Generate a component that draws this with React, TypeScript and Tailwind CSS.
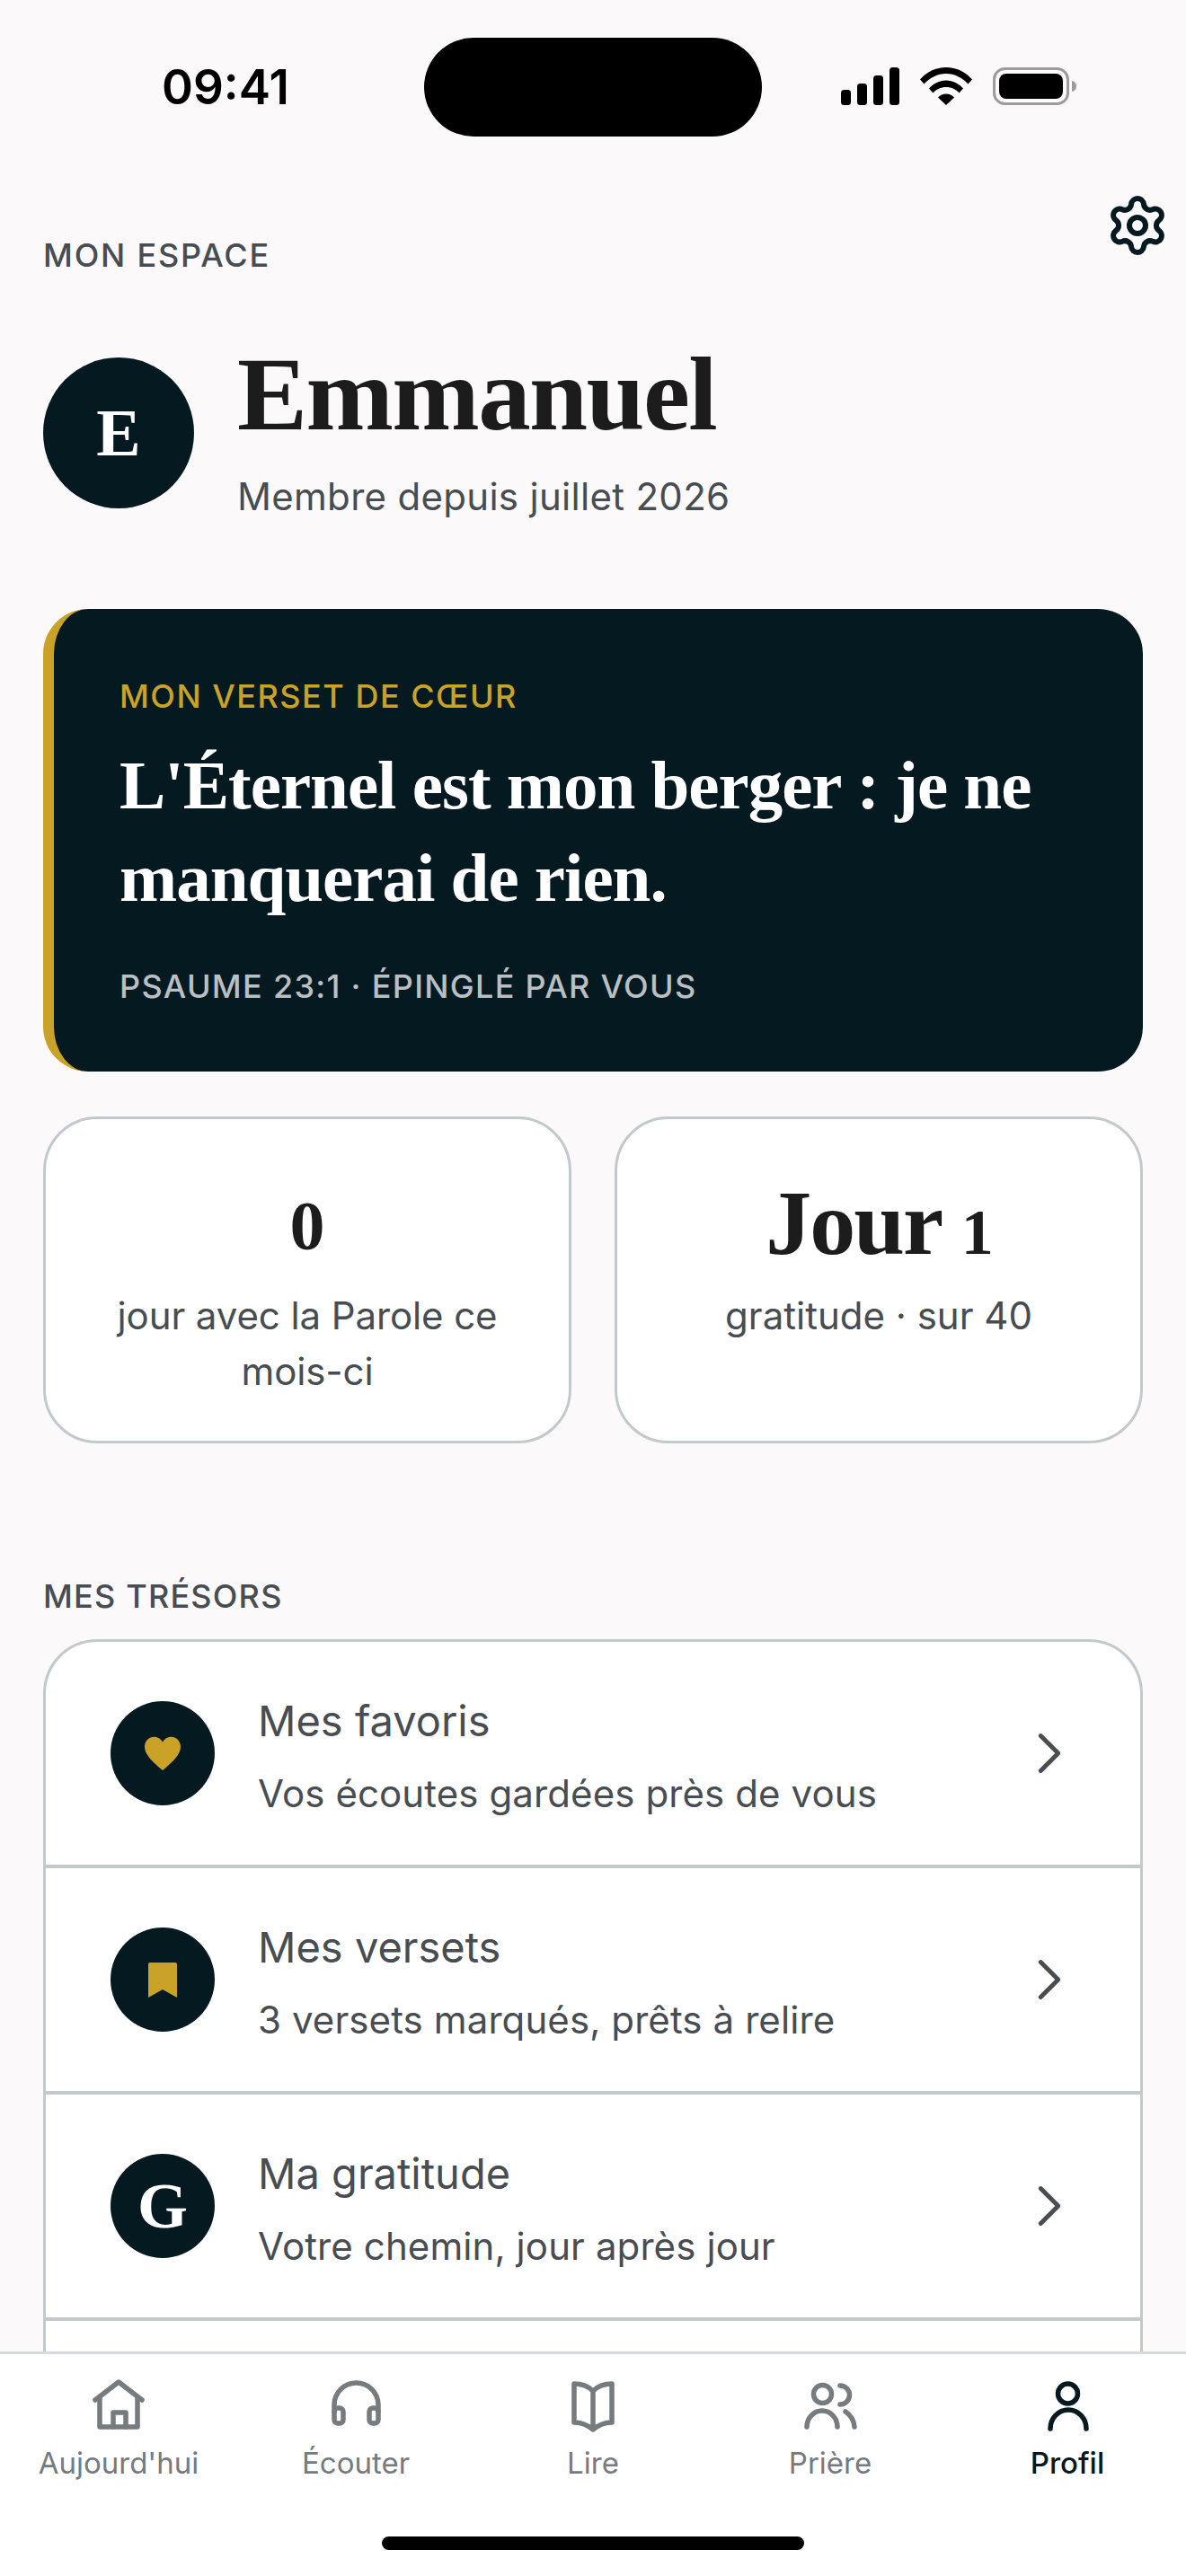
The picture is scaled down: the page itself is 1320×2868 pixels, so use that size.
import { Settings, ChevronRight } from 'lucide-react';

const SANS = 'font-["Inter","Noto_Sans",sans-serif]';
const SERIF = 'font-["Liberation_Serif",serif]';

const treasures = [
  { title: 'Mes favoris', sub: 'Vos écoutes gardées près de vous', icon: 'heart' },
  { title: 'Mes versets', sub: '3 versets marqués, prêts à relire', icon: 'bookmark' },
  { title: 'Ma gratitude', sub: 'Votre chemin, jour après jour', icon: 'g' },
];

const tabs = [
  { label: "Aujourd'hui", icon: 'home' },
  { label: 'Écouter', icon: 'headphones' },
  { label: 'Lire', icon: 'book' },
  { label: 'Prière', icon: 'users' },
  { label: 'Profil', icon: 'user', active: true },
];

function TabIcon({ name }: { name: string }) {
  return (
    <svg width="72" height="72" viewBox="0 0 72 72" fill="none" stroke="currentColor" strokeWidth="5.500" strokeLinecap="round" strokeLinejoin="round">
      {name === 'home' && (
        <>
          <path d="M10 32 36 12l26 20" />
          <path d="M15 29v33h42V29" />
          <path d="M30 62V46h14v16" />
        </>
      )}
      {name === 'headphones' && (
        <>
          <path d="M12 45V37.500a24.500 24.500 0 0 1 49 0V45" />
          <rect x="12" y="41" width="10" height="17" rx="4" />
          <rect x="51" y="41" width="10" height="17" rx="4" />
        </>
      )}
      {name === 'book' && (
        <path d="M36 22C30 16 22 14 15 14v43c8 0 15 3 21 8 6-5 13-8 21-8V14c-7 0-15 2-21 8zM36 22v43" />
      )}
      {name === 'users' && (
        <>
          <circle cx="27.500" cy="25.500" r="10" />
          <path d="M47 16a10.500 10.500 0 0 1 0 21" />
          <path d="M10 62a17 18 0 0 1 34 0" />
          <path d="M53 45q9 6 10 17" />
        </>
      )}
      {name === 'user' && (
        <>
          <circle cx="36.500" cy="25" r="11" />
          <path d="M17 64a20 21 0 0 1 40 0" />
        </>
      )}
    </svg>
  );
}

function StatusBar() {
  return (
    <div className="relative flex h-[194px] shrink-0 items-start justify-between">
      <span className="ml-[180px] mt-[66px] text-[53px] leading-[62px] font-semibold text-black font-['Inter',sans-serif]">09:41</span>
      {/* dynamic island */}
      <div className="absolute left-[472px] top-[42px] h-[110px] w-[376px] rounded-[55px] bg-black" />
      <div className="mr-[122px] mt-[75px] flex items-start gap-[23px]">
        <svg width="65" height="42" viewBox="0 0 65 42" fill="#000">
          <rect x="0" y="25" width="11" height="17" rx="3.500" />
          <rect x="18" y="18" width="11" height="24" rx="3.500" />
          <rect x="36" y="9" width="11" height="33" rx="3.500" />
          <rect x="54" y="0" width="11" height="42" rx="3.500" />
        </svg>
        <svg width="58" height="42" viewBox="0 0 58 42" fill="#000">
          <path d="M0 13.500C7.500 5 17.500 0 29 0s21.500 5 29 13.500l-4.500 5C47 11.500 38.500 7 29 7S11 11.500 4.500 18.500z" />
          <path d="M10 23.500C15 18 21.500 14.500 29 14.500S43 18 48 23.500l-4.500 5C40 24.500 35 22 29 22s-11 2.500-14.500 6.500z" />
          <path d="M20 33.500c2.500-2.500 5.500-4 9-4s6.500 1.500 9 4L29 42z" />
        </svg>
        <svg width="93" height="42" viewBox="0 0 93 42">
          <rect x="1.500" y="1.500" width="82" height="39" rx="12" fill="none" stroke="#9c9c9c" strokeWidth="3" />
          <rect x="7" y="7" width="71" height="28" rx="8" fill="#000" />
          <path d="M88 15c3 .5 5 3 5 6s-2 5.500-5 6z" fill="#9c9c9c" />
        </svg>
      </div>
    </div>
  );
}

function TreasureIcon({ kind }: { kind: string }) {
  if (kind === 'heart') {
    return (
      <svg width="44" height="40" viewBox="0 0 24 22" fill="#c9a227">
        <path d="M12 21.500C5 15.500 1 11.500 1 7c0-3.500 2.700-6 5.800-6 2.200 0 4.200 1.200 5.200 3.200C13 2.200 15 1 17.200 1 20.300 1 23 3.500 23 7c0 4.500-4 8.500-11 14.500z" />
      </svg>
    );
  }
  if (kind === 'bookmark') {
    return (
      <svg width="32" height="39" viewBox="0 0 32 39" fill="#c9a227">
        <path d="M2 0h28a2 2 0 0 1 2 2v37L16 30 0 39V2a2 2 0 0 1 2-2z" />
      </svg>
    );
  }
  return <span className={`${SERIF} text-[72px] leading-none font-bold text-white`}>G</span>;
}

export default function App() {
  return (
    <div className={`flex h-[2868px] w-[1320px] flex-col overflow-hidden bg-[#fbf9fa] ${SANS}`}>
      <StatusBar />

      <div className="min-h-0 flex-1 overflow-hidden px-[48px]">
        <div className="flex h-[94px] items-start justify-between">
          <span className="mt-[68px] text-[36px] leading-[44px] font-medium tracking-[1.800px] text-[#474d51]">MON ESPACE</span>
          <Settings size={72} strokeWidth={2} className="-mr-[30px] mt-[21px] text-[#051a20]" />
        </div>

        <div className="mt-[97px] flex items-center gap-[48px]">
          <div className={`${SERIF} flex h-[168px] w-[168px] shrink-0 items-center justify-center rounded-full bg-[#051a20] text-[74px] font-bold text-white`}>
            E
          </div>
          <div className="-mt-[8px]">
            <h1 className={`${SERIF} text-[117px] leading-[124px] font-bold tracking-[-1.600px] text-[#1c1c1c]`}>Emmanuel</h1>
            <p className="mt-[26px] text-[42px] leading-[52px] tracking-[0.300px] text-[#474d51]">Membre depuis juillet 2026</p>
          </div>
        </div>

        <section className="mt-[99px] h-[515px] rounded-[50px] border-l-[12px] border-[#c9a227] bg-[#051a20] pl-[73px] pr-[48px] pt-[75px]">
          <p className="text-[36px] leading-[44px] font-medium tracking-[1.500px] text-[#c9a227]">MON VERSET DE CŒUR</p>
          <p className={`${SERIF} mt-[26px] text-[77px] leading-[103px] font-bold tracking-[-1px] text-white`}>
            L'Éternel est mon berger : je ne manquerai de rien.
          </p>
          <p className="mt-[47px] text-[36px] leading-[44px] font-medium tracking-[1.300px] text-[#b9bfc2]">PSAUME 23:1 · ÉPINGLÉ PAR VOUS</p>
        </section>

        <div className="mt-[50px] grid grid-cols-2 gap-[48px]">
          <div className="h-[364px] rounded-[60px] border-[3px] border-[#c2c9cc] bg-white px-[48px] pt-[69px] text-center">
            <div className={`${SERIF} h-[100px] text-[78px] leading-[100px] font-bold text-[#1c1c1c]`}>0</div>
            <p className="mt-[19px] text-[42px] leading-[62px] tracking-[-0.100px] text-[#474d51]">jour avec la Parole ce mois-ci</p>
          </div>
          <div className="h-[364px] rounded-[60px] border-[3px] border-[#c2c9cc] bg-white px-[48px] pt-[69px] text-center">
            <div className={`${SERIF} h-[100px] text-[102px] leading-[94px] font-bold tracking-[-2px] text-[#1c1c1c]`}>
              Jour <span className="text-[72px]">1</span>
            </div>
            <p className="mt-[19px] text-[42px] leading-[62px] text-[#474d51]">gratitude · sur 40</p>
          </div>
        </div>

        <p className="mt-[148px] text-[36px] leading-[44px] font-medium tracking-[1.200px] text-[#474d51]">MES TRÉSORS</p>

        <div className="mt-[26px] rounded-t-[60px] border-x-[3px] border-t-[3px] border-[#c2c9cc] bg-white">
          {treasures.map((row) => (
            <div key={row.title} className="flex h-[252px] items-center border-b-[4px] border-[#c2c9cc] pl-[72px] pr-[62px]">
              <div className="flex h-[116px] w-[116px] shrink-0 items-center justify-center rounded-full bg-[#051a20]">
                <TreasureIcon kind={row.icon} />
              </div>
              <div className="ml-[48px] min-w-0 flex-1 pt-[5px]">
                <p className="text-[47px] leading-[60px] text-[#474d51]">{row.title}</p>
                <p className="mt-[24px] text-[42px] leading-[54px] tracking-[0.100px] text-[#474d51]">{row.sub}</p>
              </div>
              <ChevronRight size={78} strokeWidth={1.5} className="text-[#474d51]" />
            </div>
          ))}
          <div className="h-[252px]" />
        </div>
      </div>

      <nav className="relative h-[250px] shrink-0 border-t-[3px] border-[#d6dadc] bg-white">
        <div className="grid grid-cols-5 pt-[19px]">
          {tabs.map(({ label, icon, active }) => (
            <div key={label} className={`flex flex-col items-center ${active ? 'text-[#051a20]' : 'text-[#757b7f]'}`}>
              <TabIcon name={icon} />
              <span className={`mt-[8px] text-[33px] leading-[44px] ${active ? 'font-medium' : 'font-normal'}`}>{label}</span>
            </div>
          ))}
        </div>
        <div className="absolute bottom-[29px] left-[425px] h-[15px] w-[470px] rounded-full bg-black" />
      </nav>
    </div>
  );
}
